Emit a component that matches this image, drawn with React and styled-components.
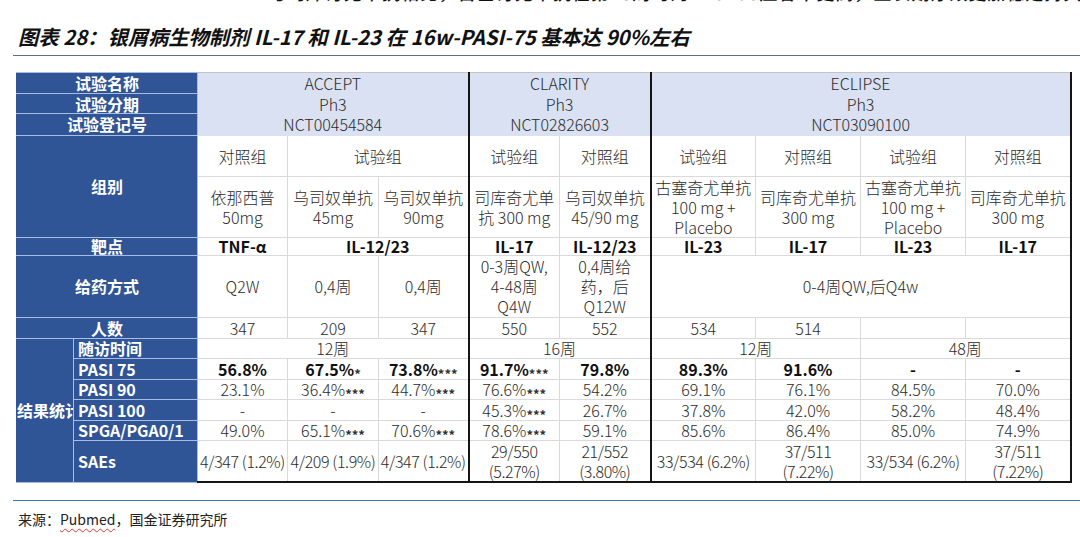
import React from 'react';
import styled, { createGlobalStyle } from 'styled-components';

const GlobalStyle = createGlobalStyle`
  html, body { margin: 0; padding: 0; background: #fff; }
  body { font-family: "Noto Sans CJK SC", "Noto Sans", sans-serif; }
`;

const Page = styled.div`
  width: 1080px;
  height: 537px;
  overflow: hidden;
`;

const TopStrip = styled.div`
  height: 5px;
  overflow: hidden;
  padding-left: 268px;
`;

const TopText = styled.div`
  margin-top: -18px;
  font: italic 500 18px/20px "Noto Sans CJK SC", sans-serif;
  color: #111;
  white-space: nowrap;
  letter-spacing: 1px;
`;

const Title = styled.h1`
  margin: 19px 0 0 18px;
  font-family: "Noto Sans CJK SC", sans-serif;
  font-size: 20.3px;
  line-height: 25px;
  font-style: italic;
  font-weight: 700;
  color: #111;
  white-space: nowrap;
`;

const Rule = styled.div`
  margin: ${p => p.$top}px 0 0 13px;
  border-top: 1px solid ${p => p.$color};
`;

const Table = styled.table`
  margin: 16px 0 0 16px;
  border-collapse: collapse;
  table-layout: fixed;
  width: 1054px;
  font-size: 16px;
  line-height: 18px;
`;

const Row = styled.tr`
  height: ${p => p.$h}px;
  line-height: ${p => p.$lh || 18}px;
`;

const Label = styled.th`
  padding: 0;
  background: #2f5597;
  color: #fff;
  font-weight: 700;
  text-align: center;
  vertical-align: middle;
  white-space: nowrap;
  overflow: hidden;
  border: 1px solid #a9bde3;
  border-left: 1px solid #2f5597;
`;

const SubLabel = styled(Label)`
  text-align: left;
  padding-left: 4px;
  border-left: 1px solid #a9bde3;
`;

const edgeBorder = p =>
  p.$edge ? '2px solid #151515' : '1px solid #dadada';

const Head = styled.td`
  padding: 0;
  background: #d9e1f2;
  color: #2b2b2b;
  font-weight: 300;
  text-align: center;
  vertical-align: middle;
  line-height: 20.5px;
  border-top: 1px solid #c4c4c4;
  border-bottom: 1px solid #d9e1f2;
  border-right: ${edgeBorder};
`;

const Cell = styled.td`
  padding: 0;
  background: #fff;
  color: ${p => (p.$bold ? '#111' : '#2b2b2b')};
  font-weight: ${p => (p.$bold ? 700 : 300)};
  text-align: center;
  vertical-align: middle;
  white-space: ${p => (p.$nowrap ? 'nowrap' : 'normal')};
  letter-spacing: ${p => (p.$nowrap ? '-0.4px' : '0')};
  border: 1px solid #dadada;
  border-right: ${edgeBorder};
  border-bottom: ${p => (p.$lastRow ? '2px solid #151515' : '1px solid #dadada')};
`;

const Stars = styled.span`
  display: inline-block;
  font-size: 13px;
  line-height: 10px;
  font-weight: 700;
  letter-spacing: 0;
  color: #333;
  transform: translateY(3px);
`;

const Source = styled.div`
  margin: 8px 0 0 18px;
  font-size: 14px;
  line-height: 20px;
  color: #222;
`;

const Wavy = styled.span`
  text-decoration: underline wavy #e0342f;
  text-decoration-thickness: 1px;
  text-underline-offset: 3px;
`;

const COLS = [57, 124, 90, 91, 90, 91, 91, 105, 105, 105, 105];

const withEdges = cells => {
  let c = 0;
  return cells.map(raw => {
    const cell = typeof raw === 'string' || Array.isArray(raw) ? { t: raw } : raw;
    const s = cell.s || 1;
    const end = c + s - 1;
    c += s;
    return { ...cell, s, edge: end === 2 || end === 4 || end === 8 };
  });
};

const Content = ({ cell }) => {
  const lines = Array.isArray(cell.t) ? cell.t : [cell.t];
  return lines.map((l, i) => (
    <React.Fragment key={i}>
      {i > 0 && <br />}
      {l}
      {cell.star && i === lines.length - 1 && <Stars>{cell.star}</Stars>}
    </React.Fragment>
  ));
};

const DataCells = ({ cells, bold, lastRow, nowrap }) =>
  withEdges(cells).map((cell, i) => (
    <Cell
      key={i}
      colSpan={cell.s}
      $edge={cell.edge}
      $bold={bold || cell.b}
      $lastRow={lastRow}
      $nowrap={nowrap}
    >
      <Content cell={cell} />
    </Cell>
  ));

const trials = [
  { s: 3, t: ['ACCEPT', 'Ph3', 'NCT00454584'] },
  { s: 2, t: ['CLARITY', 'Ph3', 'NCT02826603'] },
  { s: 4, t: ['ECLIPSE', 'Ph3', 'NCT03090100'] },
];

const groupRow = ['对照组', { t: '试验组', s: 2 }, '试验组', '对照组', '试验组', '对照组', '试验组', '对照组'];
const drugRow = [
  ['依那西普', '50mg'],
  ['乌司奴单抗', '45mg'],
  ['乌司奴单抗', '90mg'],
  ['司库奇尤单', '抗 300 mg'],
  ['乌司奴单抗', '45/90 mg'],
  ['古塞奇尤单抗', '100 mg +', 'Placebo'],
  ['司库奇尤单抗', '300 mg'],
  ['古塞奇尤单抗', '100 mg +', 'Placebo'],
  ['司库奇尤单抗', '300 mg'],
];
const targetRow = ['TNF-α', { t: 'IL-12/23', s: 2 }, 'IL-17', 'IL-12/23', 'IL-23', 'IL-17', 'IL-23', 'IL-17'];
const doseRow = [
  'Q2W',
  '0,4周',
  '0,4周',
  ['0-3周QW,', '4-48周', 'Q4W'],
  ['0,4周给', '药，后', 'Q12W'],
  { t: '0-4周QW,后Q4w', s: 4 },
];
const nRow = ['347', '209', '347', '550', '552', '534', '514', '', ''];

const results = [
  { label: '随访时间', h: 20, cells: [{ t: '12周', s: 3 }, { t: '16周', s: 2 }, { t: '12周', s: 2 }, { t: '48周', s: 2 }] },
  {
    label: 'PASI 75', h: 21, bold: true,
    cells: ['56.8%', { t: '67.5%', star: '*' }, { t: '73.8%', star: '***' }, { t: '91.7%', star: '***' }, '79.8%', '89.3%', '91.6%', '-', '-'],
  },
  {
    label: 'PASI 90', h: 20,
    cells: ['23.1%', { t: '36.4%', star: '***' }, { t: '44.7%', star: '***' }, { t: '76.6%', star: '***' }, '54.2%', '69.1%', '76.1%', '84.5%', '70.0%'],
  },
  {
    label: 'PASI 100', h: 21,
    cells: ['-', '-', '-', { t: '45.3%', star: '***' }, '26.7%', '37.8%', '42.0%', '58.2%', '48.4%'],
  },
  {
    label: 'SPGA/PGA0/1', h: 20,
    cells: ['49.0%', { t: '65.1%', star: '***' }, { t: '70.6%', star: '***' }, { t: '78.6%', star: '***' }, '59.1%', '85.6%', '86.4%', '85.0%', '74.9%'],
  },
  {
    label: 'SAEs', h: 42, lh: 20, last: true, nowrap: true,
    cells: ['4/347 (1.2%)', '4/209 (1.9%)', '4/347 (1.2%)', ['29/550', '(5.27%)'], ['21/552', '(3.80%)'], '33/534 (6.2%)', ['37/511', '(7.22%)'], '33/534 (6.2%)', ['37/511', '(7.22%)']],
  },
];

export default function App() {
  return (
    <Page>
      <GlobalStyle />
      <TopStrip>
        <TopText>与司库奇尤单抗相比，古塞奇尤单抗在第48周时的PASI 90应答率更高，且长期疗效更加稳定持久</TopText>
      </TopStrip>
      <Title>图表 28：银屑病生物制剂 IL-17 和 IL-23 在 16w-PASI-75 基本达 90%左右</Title>
      <Rule $top={6} $color="#56718f" />
      <Table>
        <colgroup>
          {COLS.map((w, i) => (
            <col key={i} style={{ width: w }} />
          ))}
        </colgroup>
        <tbody>
          <Row $h={21}>
            <Label colSpan={2}>试验名称</Label>
            {withEdges(trials).map((c, i) => (
              <Head key={i} colSpan={c.s} rowSpan={3} $edge={c.edge}>
                <Content cell={c} />
              </Head>
            ))}
          </Row>
          <Row $h={20}>
            <Label colSpan={2}>试验分期</Label>
          </Row>
          <Row $h={21}>
            <Label colSpan={2}>试验登记号</Label>
          </Row>
          <Row $h={41}>
            <Label colSpan={2} rowSpan={2}>组别</Label>
            <DataCells cells={groupRow} />
          </Row>
          <Row $h={61} $lh={20}>
            <DataCells cells={drugRow} />
          </Row>
          <Row $h={18} $lh={16}>
            <Label colSpan={2}>靶点</Label>
            <DataCells cells={targetRow} bold />
          </Row>
          <Row $h={62} $lh={20}>
            <Label colSpan={2}>给药方式</Label>
            <DataCells cells={doseRow} />
          </Row>
          <Row $h={21}>
            <Label colSpan={2}>人数</Label>
            <DataCells cells={nRow} />
          </Row>
          {results.map((r, i) => (
            <Row key={r.label} $h={r.h} $lh={r.lh}>
              {i === 0 && <Label rowSpan={results.length}>结果统计</Label>}
              <SubLabel>{r.label}</SubLabel>
              <DataCells cells={r.cells} bold={r.bold} lastRow={r.last} nowrap={r.nowrap} />
            </Row>
          ))}
        </tbody>
      </Table>
      <Rule $top={17} $color="#3d7aa8" />
      <Source>
        来源：<Wavy>Pubmed</Wavy>，国金证券研究所
      </Source>
    </Page>
  );
}
